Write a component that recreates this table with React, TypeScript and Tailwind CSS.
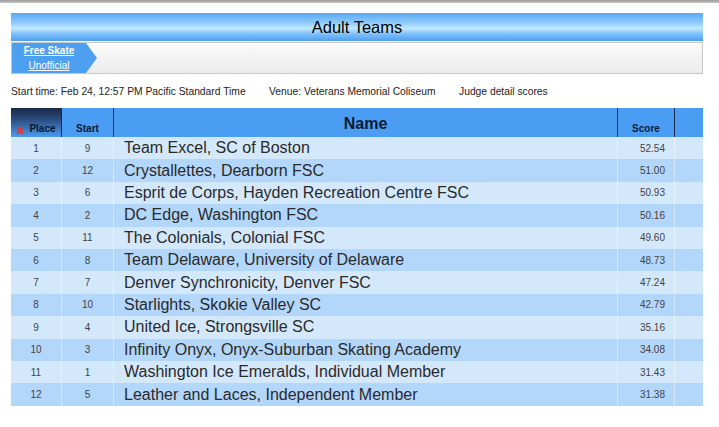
import React from 'react';

interface Team {
  place: number;
  start: number;
  name: string;
  score: string;
}

const teams: Team[] = [
  { place: 1, start: 9, name: 'Team Excel, SC of Boston', score: '52.54' },
  { place: 2, start: 12, name: 'Crystallettes, Dearborn FSC', score: '51.00' },
  { place: 3, start: 6, name: 'Esprit de Corps, Hayden Recreation Centre FSC', score: '50.93' },
  { place: 4, start: 2, name: 'DC Edge, Washington FSC', score: '50.16' },
  { place: 5, start: 11, name: 'The Colonials, Colonial FSC', score: '49.60' },
  { place: 6, start: 8, name: 'Team Delaware, University of Delaware', score: '48.73' },
  { place: 7, start: 7, name: 'Denver Synchronicity, Denver FSC', score: '47.24' },
  { place: 8, start: 10, name: 'Starlights, Skokie Valley SC', score: '42.79' },
  { place: 9, start: 4, name: 'United Ice, Strongsville SC', score: '35.16' },
  { place: 10, start: 3, name: 'Infinity Onyx, Onyx-Suburban Skating Academy', score: '34.08' },
  { place: 11, start: 1, name: 'Washington Ice Emeralds, Individual Member', score: '31.43' },
  { place: 12, start: 5, name: 'Leather and Laces, Independent Member', score: '31.38' },
];

const SortIcon = () => (
  <svg width="8" height="9" viewBox="0 0 8 9" className="mr-[5px] mb-[1px]">
    <path d="M1 4.5 L4 1.5 L7 4.5" fill="none" stroke="#e8352b" strokeWidth="1.8" />
    <path d="M1 8 L4 5 L7 8" fill="none" stroke="#e8352b" strokeWidth="1.8" />
  </svg>
);

export default function App() {
  return (
    <div className="w-[719px] h-[427px] bg-white overflow-hidden" style={{ fontFamily: '"Liberation Sans", Arial, sans-serif' }}>
      <div className="h-[3px] bg-gradient-to-b from-[#9a9a9a] to-[#c8c8c8]" />

      <div className="ml-[11px] w-[692px] mt-[10px]">
        {/* title bar */}
        <div className="h-[28px] flex items-center justify-center text-[16.5px] text-black bg-[linear-gradient(to_bottom,#58a8f4_0%,#8fcbfb_35%,#c2e8ff_55%,#7cc0fa_75%,#4f9ff0_100%)]">
          Adult Teams
        </div>

        {/* segment tabs */}
        <div className="h-[32px] mt-[1px] flex border border-[#c9c9c9] bg-gradient-to-b from-[#fbfbfb] to-[#ebebeb]">
          <div className="relative w-[74px] h-full bg-[#4d9ff0] flex flex-col items-center justify-center leading-[15px]">
            <span className="text-white text-[10px] font-bold underline">Free Skate</span>
            <span className="text-white text-[10px] underline">Unofficial</span>
            <div className="absolute right-[-11px] top-0 w-0 h-0 border-t-[15px] border-b-[15px] border-l-[11px] border-t-transparent border-b-transparent border-l-[#4d9ff0]" />
          </div>
        </div>
      </div>

      {/* info line */}
      <div className="flex text-[10.3px] text-[#222] mt-[11px] pl-[11px] h-[14px] items-center">
        <span className="w-[258px]">Start time: Feb 24, 12:57 PM Pacific Standard Time</span>
        <span className="w-[190px]">Venue: Veterans Memorial Coliseum</span>
        <span>Judge detail scores</span>
      </div>

      {/* results table */}
      <div className="ml-[11px] w-[692px] mt-[9px]">
        <div className="flex h-[29px] bg-[#4b9cf3] text-[#0b1a33] font-bold">
          <div className="w-[51px] flex items-end justify-center pb-[1px] text-[10px] border-r border-[#1b2c4a] bg-[linear-gradient(to_bottom,#1a2a47_0%,#25416d_30%,#4b9cf3_100%)]">
            <SortIcon />
            Place
          </div>
          <div className="w-[52px] flex items-end justify-center pb-[1px] text-[10px] border-r border-[#1b2c4a]">
            Start
          </div>
          <div className="w-[504px] flex items-end justify-center pb-[1px] text-[16px] border-r border-[#1b2c4a]">
            Name
          </div>
          <div className="w-[57px] flex items-end justify-center pb-[1px] text-[10px] border-r border-[#1b2c4a]">
            Score
          </div>
          <div className="flex-1" />
        </div>

        {teams.map((t, i) => (
          <div
            key={t.place}
            className={`flex h-[22.4px] items-center ${i % 2 === 0 ? 'bg-[#d4e8fc]' : 'bg-[#b3d6fb]'}`}
          >
            <div className="w-[51px] h-full flex items-center justify-center text-[10px] text-[#444] border-r border-white/40">
              {t.place}
            </div>
            <div className="w-[52px] h-full flex items-center justify-center text-[10px] text-[#444] border-r border-white/40">
              {t.start}
            </div>
            <div className="w-[504px] h-full flex items-center pl-[10px] text-[16px] text-[#2a2a2a] border-r border-white/40 whitespace-nowrap">
              {t.name}
            </div>
            <div className="w-[57px] h-full flex items-center justify-end pr-[9px] text-[10px] text-[#444] border-r border-white/40">
              {t.score}
            </div>
            <div className="flex-1" />
          </div>
        ))}
      </div>
    </div>
  );
}
